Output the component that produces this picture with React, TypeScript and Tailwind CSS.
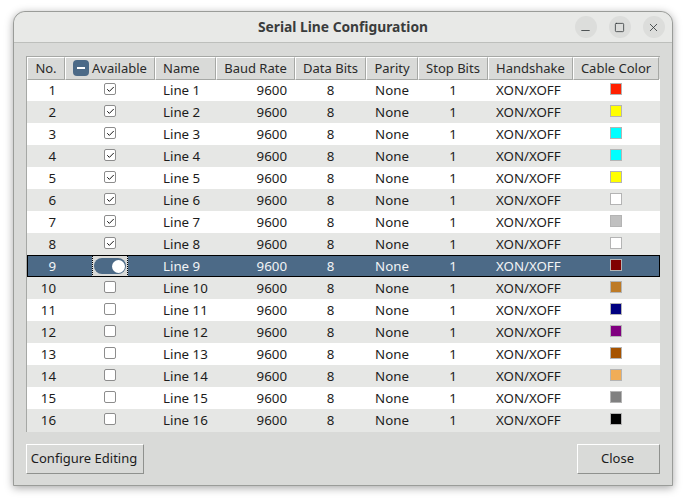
import React from 'react';
import { Check, Minus, Square, X } from 'lucide-react';

const colors = [
  '#ff2000', '#ffff00', '#00ffff', '#00ffff', '#ffff00', '#ffffff', '#c0c0c0', '#ffffff',
  '#800000', '#bd7a26', '#000080', '#800080', '#a65300', '#f0ad57', '#808080', '#000000',
];

const grid = 'grid grid-cols-[38px_90px_61px_79px_71px_52px_70px_85px_86px]';

const headers = ['No.', 'Available', 'Name', 'Baud Rate', 'Data Bits', 'Parity', 'Stop Bits', 'Handshake', 'Cable Color'];

const Row: React.FC<{ n: number; color: string }> = ({ n, color }) => {
  const selected = n === 9;
  const stripe = n % 2 === 1 ? 'bg-white text-[#1c1c1c]' : 'bg-[#e6e7e5] text-[#1c1c1c]';
  return (
    <div
      className={`${grid} h-[22px] items-center pt-[2px] text-[13.3px] last:h-[23px] last:pb-[1px] ${
        selected ? 'bg-[#4c6a87] text-[#f2f4f5] outline outline-1 -outline-offset-1 outline-black' : stripe
      }`}
    >
      <div className="pr-[9px] text-right">{n}</div>
      <div className="flex justify-center">
        {selected ? (
          <div className="-mt-[2px] flex h-[22px] w-[36px] items-center justify-center border border-dotted border-black bg-[#d9dad8]">
            <div className="flex h-[16px] w-[32px] items-center justify-end rounded-full bg-[#4c6a87] px-[1px]">
              <div className="h-[13px] w-[13px] rounded-full bg-white" />
            </div>
          </div>
        ) : (
          <div className="-mt-[4px] flex h-[12px] w-[12px] items-center justify-center rounded-[2px] border border-[#8d8d8d] bg-white">
            {n < 9 && <Check size={9} strokeWidth={2.6} className="text-[#111111]" />}
          </div>
        )}
      </div>
      <div className="pl-[8px]">Line {n}</div>
      <div className="pr-[8px] text-right">9600</div>
      <div className="text-center">8</div>
      <div className="text-center">None</div>
      <div className="text-center">1</div>
      <div className="pl-[8px]">XON/XOFF</div>
      <div className="flex justify-center">
        <div className="-mt-[4px] h-[12px] w-[12px] border border-[#b4b4b4]" style={{ backgroundColor: color }} />
      </div>
    </div>
  );
};

const WinButton: React.FC<{ children: React.ReactNode }> = ({ children }) => (
  <div className="flex h-[22px] w-[22px] items-center justify-center rounded-full bg-[#dcdddb] text-[#2e3436]">
    {children}
  </div>
);

const DialogButton: React.FC<{ label: string; className: string }> = ({ label, className }) => (
  <button
    className={`h-[30px] border border-t-white border-l-white border-r-[#8f918e] border-b-[#8f918e] bg-[#d9dad8] pr-[2px] text-[13px] text-[#1c1c1c] ${className}`}
  >
    {label}
  </button>
);

export default function App() {
  return (
    <div className="h-[503px] w-[686px] bg-white pt-[11px] pl-[13px] font-['Noto_Sans',sans-serif]">
      <div className="flex h-[475px] w-[660px] flex-col rounded-t-[12px] border border-[#9a9c99] bg-[#d9dad8] shadow-[0_2px_8px_rgba(0,0,0,0.35)]">
        <div className="flex h-[31px] flex-none items-center justify-between rounded-t-[12px] border-b border-[#bdbfbc] bg-[#e8e9e7] px-[7px]">
          <div className="w-[90px] flex-none" />
          <div className="text-[13.8px] font-bold text-[#3a3c3c]">Serial Line Configuration</div>
          <div className="flex w-[90px] flex-none justify-end gap-[12px]">
            <WinButton>
              <Minus size={13} strokeWidth={1.5} className="mt-[6px]" />
            </WinButton>
            <WinButton>
              <Square size={11} strokeWidth={1.7} />
            </WinButton>
            <WinButton>
              <X size={13} strokeWidth={1.5} />
            </WinButton>
          </div>
        </div>

        <div className="flex flex-1 flex-col px-[12px] pt-[13px]">
          <div className="w-[634px] border-t border-l border-[#a6a8a5]">
            <div className={`${grid} h-[22px] items-center gap-0 text-[13px] text-[#2a2a2a]`}>
              {headers.map((h) => (
                <div
                  key={h}
                  className={`flex h-full items-center gap-[3px] border border-t-white border-l-white border-r-[#a6a8a5] border-b-[#a6a8a5] bg-[#d9dad8] pt-[1px] ${
                    h === 'Name' ? 'justify-start pl-[7px]' : 'justify-center'
                  }`}
                >
                  {h === 'Available' && (
                    <span className="-mt-[1px] flex h-[16px] w-[16px] items-center justify-center rounded-[4px] bg-[#4c6a87]">
                      <span className="h-[2px] w-[8px] bg-white" />
                    </span>
                  )}
                  {h}
                </div>
              ))}
            </div>
            {colors.map((c, i) => (
              <Row key={i} n={i + 1} color={c} />
            ))}
          </div>

          <div className="mt-[12px] flex justify-between">
            <DialogButton label="Configure Editing" className="w-[118px]" />
            <DialogButton label="Close" className="w-[83px]" />
          </div>
        </div>
      </div>
    </div>
  );
}
